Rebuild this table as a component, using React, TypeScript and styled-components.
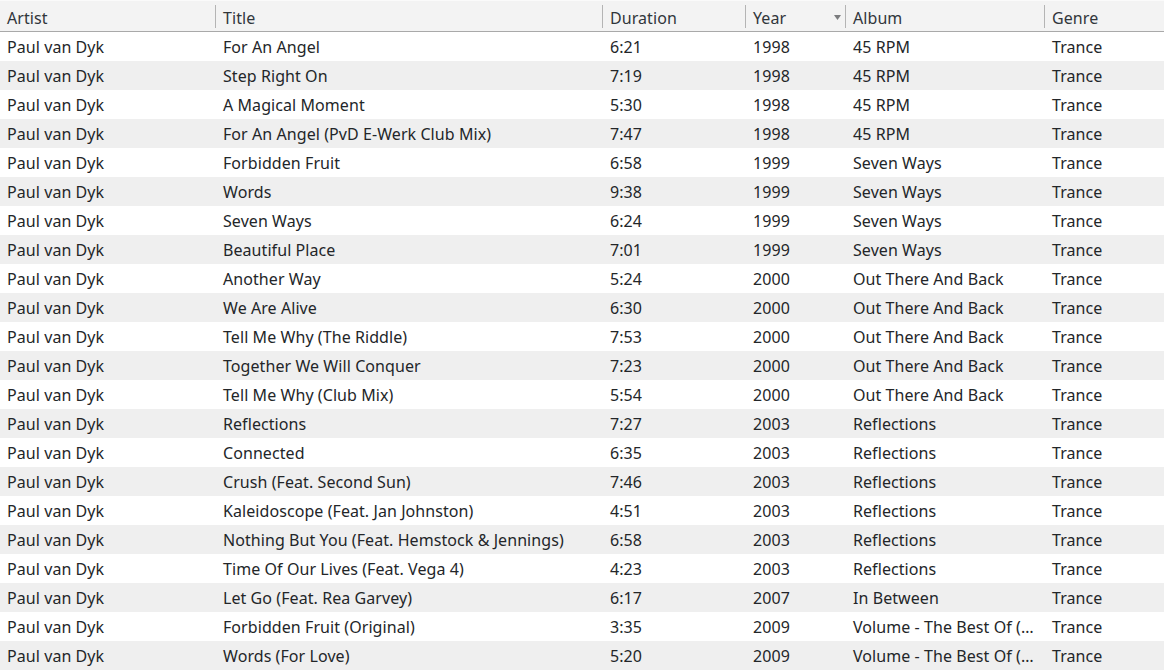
import React from "react";
import styled, { createGlobalStyle } from "styled-components";

const Global = createGlobalStyle`
  html, body { margin: 0; padding: 0; background: #ffffff; }
  body { font-family: "Noto Sans", "DejaVu Sans", sans-serif; color: #232629; overflow: hidden; }
`;

const COLS = "215px 387px 143px 100px 199px 120px";

const Table = styled.div`
  width: 1164px;
  height: 670px;
  overflow: hidden;
  font-size: 16px;
  letter-spacing: 0.07px;
`;

const Header = styled.div`
  display: grid;
  grid-template-columns: ${COLS};
  background: #f3f3f3;
  border-top: 1px solid #fafafa;
  border-bottom: 1px solid #a9a9a9;
  box-sizing: border-box;
  height: 32px;
`;

const HeadCell = styled.div<{ $first?: boolean }>`
  position: relative;
  display: flex;
  align-items: center;
  padding-left: ${(p) => (p.$first ? "7px" : "8px")};
  padding-top: 3px;
  color: #31363b;
  white-space: nowrap;
  &::before {
    content: "";
    display: ${(p) => (p.$first ? "none" : "block")};
    position: absolute;
    left: 0;
    top: 4px;
    bottom: 3px;
    width: 1px;
    background: #b4b4b4;
  }
`;

const SortArrow = styled.svg`
  position: absolute;
  right: 4px;
  top: 14px;
`;

const Row = styled.div<{ $alt: boolean }>`
  display: grid;
  grid-template-columns: ${COLS};
  height: 29px;
  background: ${(p) => (p.$alt ? "#efefef" : "#ffffff")};
`;

const Cell = styled.div<{ $first?: boolean }>`
  display: flex;
  align-items: center;
  padding-left: ${(p) => (p.$first ? "7px" : "8px")};
  padding-right: 6px;
  overflow: hidden;
  white-space: nowrap;
  min-width: 0;
`;

const rows: [string, string, string, string, string][] = [
  ["For An Angel", "6:21", "1998", "45 RPM", "Trance"],
  ["Step Right On", "7:19", "1998", "45 RPM", "Trance"],
  ["A Magical Moment", "5:30", "1998", "45 RPM", "Trance"],
  ["For An Angel (PvD E-Werk Club Mix)", "7:47", "1998", "45 RPM", "Trance"],
  ["Forbidden Fruit", "6:58", "1999", "Seven Ways", "Trance"],
  ["Words", "9:38", "1999", "Seven Ways", "Trance"],
  ["Seven Ways", "6:24", "1999", "Seven Ways", "Trance"],
  ["Beautiful Place", "7:01", "1999", "Seven Ways", "Trance"],
  ["Another Way", "5:24", "2000", "Out There And Back", "Trance"],
  ["We Are Alive", "6:30", "2000", "Out There And Back", "Trance"],
  ["Tell Me Why (The Riddle)", "7:53", "2000", "Out There And Back", "Trance"],
  ["Together We Will Conquer", "7:23", "2000", "Out There And Back", "Trance"],
  ["Tell Me Why (Club Mix)", "5:54", "2000", "Out There And Back", "Trance"],
  ["Reflections", "7:27", "2003", "Reflections", "Trance"],
  ["Connected", "6:35", "2003", "Reflections", "Trance"],
  ["Crush (Feat. Second Sun)", "7:46", "2003", "Reflections", "Trance"],
  ["Kaleidoscope (Feat. Jan Johnston)", "4:51", "2003", "Reflections", "Trance"],
  ["Nothing But You (Feat. Hemstock & Jennings)", "6:58", "2003", "Reflections", "Trance"],
  ["Time Of Our Lives (Feat. Vega 4)", "4:23", "2003", "Reflections", "Trance"],
  ["Let Go (Feat. Rea Garvey)", "6:17", "2007", "In Between", "Trance"],
  ["Forbidden Fruit (Original)", "3:35", "2009", "Volume - The Best Of (\u2026", "Trance"],
  ["Words (For Love)", "5:20", "2009", "Volume - The Best Of (\u2026", "Trance"],
];

export default function App() {
  return (
    <>
      <Global />
      <Table>
        <Header>
          <HeadCell $first>Artist</HeadCell>
          <HeadCell>Title</HeadCell>
          <HeadCell>Duration</HeadCell>
          <HeadCell>
            Year
            <SortArrow width="7" height="5" viewBox="0 0 7 5">
              <path d="M0 0 L7 0 L3.5 5 Z" fill="#7b7c7e" />
            </SortArrow>
          </HeadCell>
          <HeadCell>Album</HeadCell>
          <HeadCell>Genre</HeadCell>
        </Header>
        {rows.map((r, i) => (
          <Row key={i} $alt={i % 2 === 1}>
            <Cell $first>Paul van Dyk</Cell>
            <Cell>{r[0]}</Cell>
            <Cell>{r[1]}</Cell>
            <Cell>{r[2]}</Cell>
            <Cell>{r[3]}</Cell>
            <Cell>{r[4]}</Cell>
          </Row>
        ))}
      </Table>
    </>
  );
}
